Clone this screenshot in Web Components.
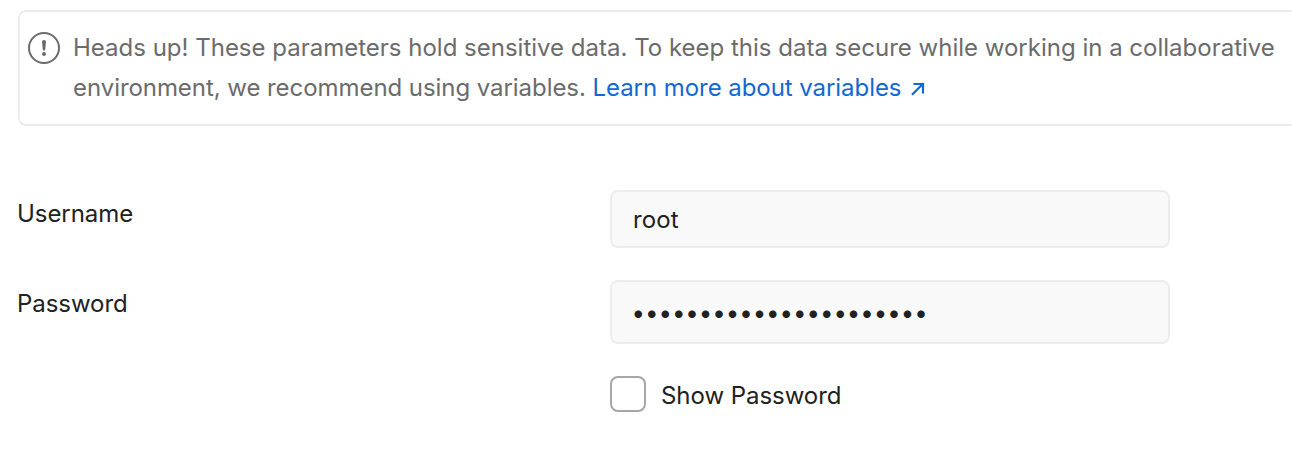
<!DOCTYPE html>
<html lang="en"><head><meta charset="utf-8"><title>Authorization</title>
<style>body{margin:0;background:#fff;overflow:hidden;font:24px/40px Inter,"Liberation Sans",sans-serif;color:#212121}</style></head><body>
<auth-panel></auth-panel>
<script>
class Base extends HTMLElement{constructor(){super();this.attachShadow({mode:'open'}).innerHTML=this.constructor.html;}}
customElements.define('heads-up',class extends Base{static html=`<style>
:host{display:flex;box-sizing:border-box;width:1320px;height:116px;border:2px solid #ededed;border-radius:8px;padding:16px 0 0 8px;color:#6b6b6b}
svg{flex:none;width:32px;height:32px;margin:4px 13px 0 0}
p{margin:0;white-space:nowrap}
</style><svg viewBox="0 0 32 32" fill="none" stroke="#6b6b6b" stroke-width="2"><circle cx="16" cy="16" r="15"/><path d="M14 9.5Q14 8 16 8T18 9.5L17.2 18Q16 19.2 14.8 18Z" fill="#6b6b6b" stroke="none"/><circle cx="16" cy="22" r="2" fill="#6b6b6b" stroke="none"/></svg><p><slot></slot></p>`});
customElements.define('ext-link',class extends Base{static html=`<style>
:host{display:inline;color:#1268d3}svg{width:14px;height:14px;margin-left:10px;vertical-align:0}
</style><slot></slot><svg viewBox="0 0 14 14" fill="none" stroke="#1268d3" stroke-width="2.2"><path d="M1 12.8L12.5 1.3M2.5 2H12V11.5"/></svg>`});
customElements.define('text-box',class extends Base{static html=`<style>
:host{display:flex;align-items:center;box-sizing:border-box;width:560px;height:58px;padding:2px 0 0 21px;border:2px solid #ededed;border-radius:8px;background:#f9f9f9;letter-spacing:.15px}
</style><slot></slot>`});
customElements.define('form-row',class extends Base{static html=`<style>
:host{display:grid;grid-template-columns:592px 560px;line-height:48px}
::slotted([slot=label]){margin-left:-1px;letter-spacing:-.06px}
</style><slot name="label"></slot><slot></slot>`});
customElements.define('check-box',class extends Base{static html=`<style>
:host{display:flex;align-items:center;gap:15px;margin:32px 0 0 592px;height:36px;line-height:36px;letter-spacing:-.05px}
i{box-sizing:border-box;width:36px;height:36px;border:2px solid #a6a6a6;border-radius:8px;background:#fff}
span{padding-top:4px}
</style><i></i><span><slot></slot></span>`});
customElements.define('auth-panel',class extends Base{static html=`<style>
:host{display:block;padding:10px 0 0 18px}
form-row{margin-top:32px}heads-up+form-row{margin-top:64px}
.second{letter-spacing:-.06px}
.pw{height:64px;padding:2px 0 0 19.5px;letter-spacing:-.04px}
</style>
<heads-up>Heads up! These parameters hold sensitive data. To keep this data secure while working in a collaborative<br><span class="second">environment, we recommend using variables. <ext-link>Learn more about variables</ext-link></span></heads-up>
<form-row><span slot="label">Username</span><text-box>root</text-box></form-row>
<form-row><span slot="label">Password</span><text-box class="pw">••••••••••••••••••••••</text-box></form-row>
<check-box>Show Password</check-box>`});
</script></body></html>
